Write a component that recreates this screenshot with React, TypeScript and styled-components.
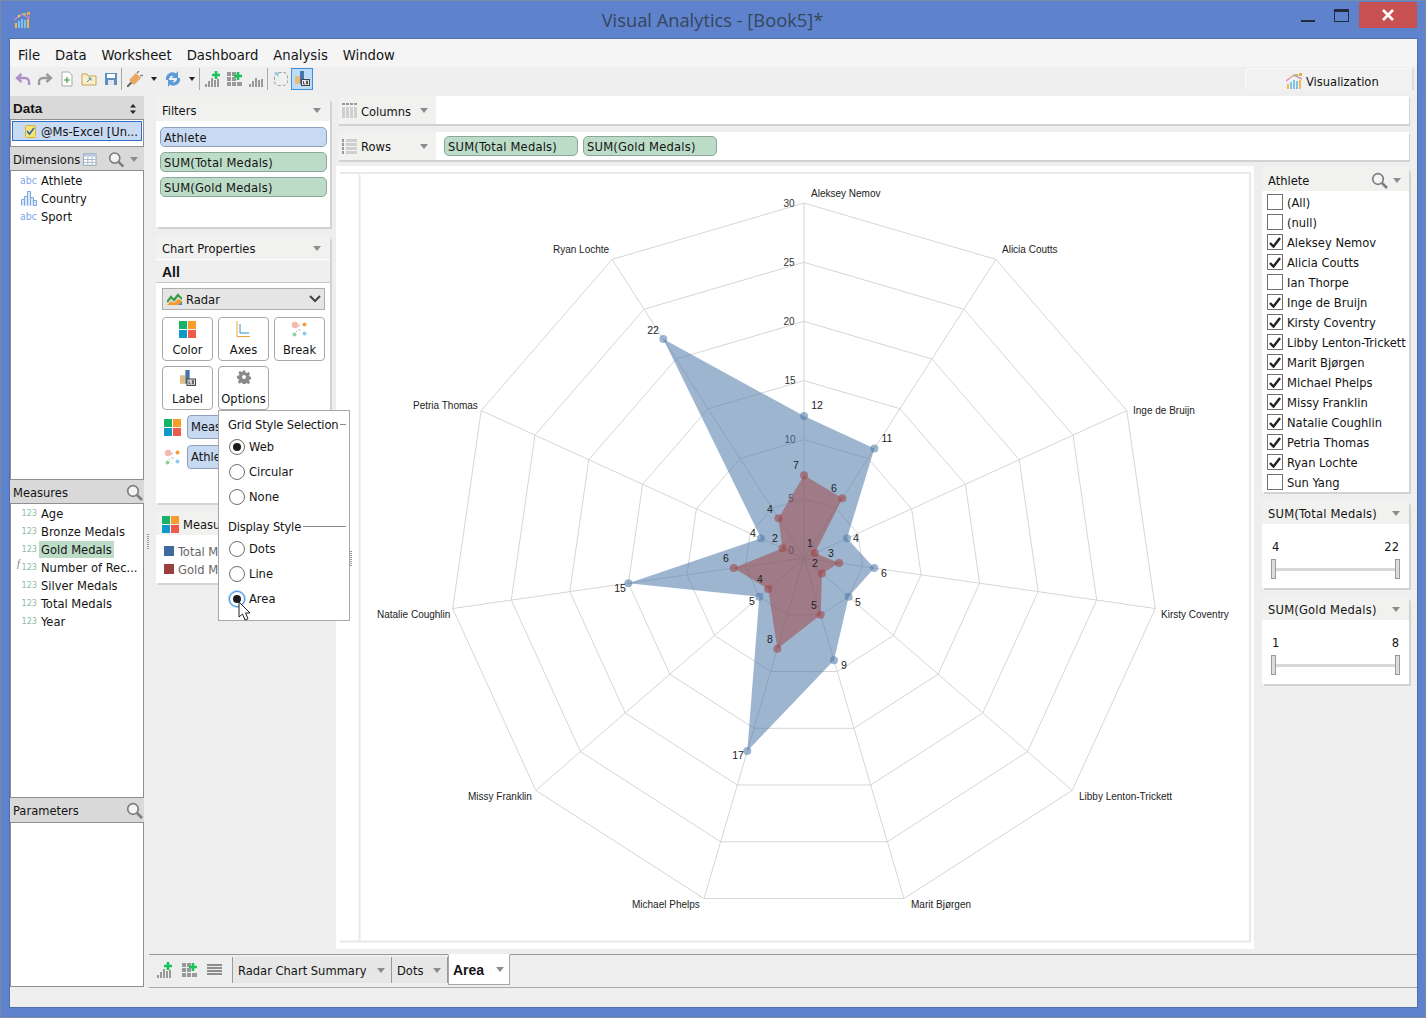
import React from "react";
import styled, { createGlobalStyle } from "styled-components";

const Global = createGlobalStyle`
  html, body { margin: 0; padding: 0; background: #5f82cc; }
  body { font-family: "DejaVu Sans", "Liberation Sans", sans-serif; font-stretch: condensed; font-size: 12.8px; color: #141414; }
  * { box-sizing: border-box; }
`;

const Win = styled.div`
  position: relative; width: 1426px; height: 1018px; background: #5f82cc;
  border: 1px solid #7a8ba8; display: flex; flex-direction: column; overflow: hidden;
`;
const TitleBar = styled.div`
  height: 38px; flex: none; display: grid; grid-template-columns: 1fr auto 1fr; align-items: start;
`;
const TitleLeft = styled.div`padding: 11px 0 0 13px; display: flex;`;
const TitleText = styled.div`
  font-family: "Open Sans", sans-serif; font-stretch: normal; font-size: 18.3px; color: #36465c; line-height: 38px; margin-left: -1px;
`;
const WinButtons = styled.div`display: flex; justify-content: flex-end; align-items: flex-start; padding-right: 8px;`;
const MinBtn = styled.div`width: 14px; height: 2px; background: #222c3c; margin-top: 19px; margin-right: 19px;`;
const MaxBtn = styled.div`width: 15px; height: 13px; border: 1.5px solid #222c3c; border-top-width: 3px; margin-top: 8px; margin-right: 10px;`;
const CloseBtn = styled.div`width: 58px; height: 26px; background: #c75050; margin-top: 1px; display: flex; align-items: center; justify-content: center;`;

const Content = styled.div`
  flex: none; margin-left: 9px; width: 1407px; height: 968px; background: #eeeeee; display: flex; flex-direction: column;
  box-shadow: 0 0 0 1px #506fae;
`;
const MenuBar = styled.div`height: 28px; flex: none; background: #f5f5f5; display: flex; align-items: center; padding: 2px 0 0 8px; gap: 15px; font-size: 14.7px;`;
const Toolbar = styled.div`height: 29px; flex: none; background: #efefef; display: flex; align-items: center; padding: 0 0 5px 5px; gap: 6px; position: relative;`;
const ToolSep = styled.div`width: 1px; height: 22px; background: #a9a9a9; margin: 0 -1px 0 -4px; flex: none;`;
const ToolCaret = styled.div`width: 0; height: 0; border: 3px solid transparent; border-top: 4px solid #222; border-bottom: none; margin: 0 2px; flex: none;`;
const ToolActive = styled.div`
  width: 22px; height: 22px; margin-left: -4px; border: 1px solid #3f8fe0; background: #bcdcf7; display: flex; align-items: center; justify-content: center; flex: none;
`;
const VizTab = styled.div`
  margin-left: auto; margin-right: 3px; width: 169px; height: 22px; align-self: flex-start; margin-top: 1px; background: #f1f1f1; border-radius: 6px 0 0 0;
  border-top: 1px solid #fafafa; border-left: 1px solid #fafafa; border-right: 2px solid #dcdcdc;
  display: flex; align-items: center; gap: 4px; padding: 3px 0 0 40px;
`;
const Main = styled.div`flex: 1; min-height: 0; display: grid; grid-template-columns: 134px 1fr;`;
const LeftPanel = styled.div`display: flex; flex-direction: column; border-right: 1px solid #8e8e94; border-left: 1px solid #8e8e94; border-bottom: 1px solid #8e8e94; margin-bottom: 1px;`;
const LeftHead = styled.div<{ $h: number }>`
  height: ${p => p.$h}px; flex: none; background: #d9d9d9; display: flex; align-items: center; gap: 3px;
  border-bottom: 1px solid #8e8e94; margin-left: -1px; margin-right: -1px; padding: ${p => (p.$h === 24 ? 2 : 0)}px 0 0 3px;
`;
const HeadGrow = styled.span`flex: 1;`;
const DataTitle = styled.span`font-family: "Liberation Sans", sans-serif; font-weight: 700; font-size: 13.5px;`;
const SortArrows = styled.svg`margin-right: 7px;`;
const SourceWrap = styled.div`height: 27px; flex: none; background: #fff; padding: 1px 1px 0 1px; border-bottom: 1px solid #8e8e94;`;
const SourceBox = styled.div`height: 20px; border: 1px solid #2f6fc7; background: #c9daf3; display: flex; align-items: center; padding-left: 12px; gap: 5px; white-space: nowrap; overflow: hidden;`;
const LeftList = styled.div<{ $h: number }>`height: ${p => p.$h}px; flex: none; background: #fff; border-bottom: 1px solid #8e8e94;`;
const LeftFill = styled.div`flex: 1; background: #fff;`;
const FieldRow = styled.div`height: 18px; display: flex; align-items: center; white-space: nowrap; position: relative;`;
const FieldIcon = styled.span<{ $c: string; $s: number }>`width: 28px; flex: none; padding-right: 2px; color: ${p => p.$c}; font-size: ${p => p.$s}px; display: flex; justify-content: flex-end; align-items: center; height: 18px; font-family: "DejaVu Sans", sans-serif;`;
const FieldName = styled.span<{ $hl?: boolean }>`padding: 0 2px; height: 17px; line-height: 17px; background: ${p => (p.$hl ? "#bcdcc8" : "transparent")};`;
const Fx = styled.span`position: absolute; left: 6px; top: 0; font-family: "Liberation Serif", serif; font-style: italic; font-size: 10px; color: #777;`;
const SpacerS = styled.span`width: 5px; flex: none;`;
const SearchEnd = styled.span`margin-right: 1px; display: flex;`;
const HeadCaret = styled.div`width: 0; height: 0; border-left: 4px solid transparent; border-right: 4px solid transparent; border-top: 5px solid #8c8c8c; flex: none; margin-right: 6px;`;

const RightPart = styled.div`display: flex; flex-direction: column; min-width: 0;`;
const Workspace = styled.div`flex: none; height: 858px; display: grid; grid-template-columns: 174px 1fr; padding-left: 12px; column-gap: 6px;`;
const SideCol = styled.div`display: flex; flex-direction: column; padding-top: 1px;`;
const Card = styled.div<{ $h: number; $mb?: number }>`
  height: ${p => p.$h}px; margin-bottom: ${p => p.$mb ?? 0}px; background: #fff; flex: none; box-shadow: 2px 2px 0 #d2d2d2; border-radius: 5px 5px 0 0; overflow: hidden;
`;
const CardHead = styled.div`height: 24px; background: #f1f1ef; display: flex; align-items: center; padding: 2px 9px 0 6px; justify-content: space-between;`;
const WideTitle = styled.span`letter-spacing: 0.2px;`;
const Caret = styled.div`width: 0; height: 0; border-left: 4px solid transparent; border-right: 4px solid transparent; border-top: 5px solid #8c8c8c; flex: none;`;
const PillStack = styled.div`display: flex; flex-direction: column; gap: 5px; padding: 6px 3px 0 4px;`;
const Pill = styled.div<{ $k: "b" | "g" }>`
  height: 20px; display: flex; align-items: center; padding-left: 3px; border-radius: 5px; white-space: nowrap; overflow: hidden; letter-spacing: 0.2px;
  background: ${p => (p.$k === "b" ? "#c8d9f2" : "#bcdcc8")}; border: 1px solid ${p => (p.$k === "b" ? "#8d9fbc" : "#8ba898")};
`;
const AllRow = styled.div`height: 24px; background: #efefef; border-top: 1px solid #fff; border-bottom: 1px solid #c8c8c8; padding-left: 6px; line-height: 24px; font-family: "Liberation Sans", sans-serif; font-weight: 700; font-size: 14px;`;
const SelectBox = styled.div`
  margin: 5px 5px 0 6px; height: 22px; border: 1px solid #adadad; background: #e5e5e5; display: flex; align-items: center; padding: 0 3px 0 4px; gap: 4px;
`;
const BtnGrid = styled.div`display: grid; grid-template-columns: repeat(3, 51px); column-gap: 5px; row-gap: 5px; padding: 7px 0 0 6px;`;
const PropBtn = styled.div`
  height: 44px; border: 1px solid #a8a8a8; border-radius: 4px; background: #fff; display: flex; flex-direction: column; align-items: center; justify-content: flex-start; padding-top: 3px; gap: 4px;
`;
const OptionsLabel = styled.span`margin-top: 3px;`;
const EncRow = styled.div`display: flex; align-items: center; gap: 6px; padding-left: 8px; height: 24px; margin-top: 5px; & + & { margin-top: 6px; }`;
const EncPill = styled.div`flex: 1; height: 24px; background: #c8d9f2; border: 1px solid #8d9fbc; border-radius: 4px; padding-left: 3px; line-height: 22px; white-space: nowrap; overflow: hidden;`;
const LegendRow = styled.div`display: flex; align-items: center; gap: 4px; height: 18px; padding-left: 8px; color: #666; white-space: nowrap;`;
const LegendSwatch = styled.span<{ $c: string }>`width: 10px; height: 10px; background: ${p => p.$c}; flex: none;`;
const LegendHead = styled.div`height: 23px; background: #f1f1ef; display: flex; align-items: center; gap: 4px; padding: 2px 0 0 6px; margin-bottom: 7px;`;

const CenterCol = styled.div`display: flex; flex-direction: column; min-width: 0; padding-right: 8px;`;
const Shelf = styled.div<{ $mb: number }>`
  margin-left: 2px; height: 28px; margin-bottom: ${p => p.$mb}px; flex: none; background: #fff; display: flex; align-items: center; box-shadow: 1px 2px 0 #d2d2d2; border-radius: 4px 0 0 0; gap: 5px;
`;
const ShelfHead = styled.div`width: 98px; height: 100%; background: #f1f1ef; display: flex; align-items: center; padding: 0 8px 0 4px; gap: 4px; flex: none; margin-right: 3px;`;
const ShelfLabel = styled.span<{ $dy?: number }>`flex: 1; padding-top: ${p => p.$dy ?? 0}px;`;
const ShelfPill = styled(Pill)`width: 134px; flex: none;`;
const LowerRow = styled.div`flex: 1; min-height: 0; display: grid; grid-template-columns: 918px 1fr; column-gap: 8px;`;
const ChartPanel = styled.div`height: 783px; background: #fff;`;
const ChartSvg = styled.svg`display: block; width: 918px; height: 783px;`;
const RightCol = styled.div`display: flex; flex-direction: column; padding-top: 1px;`;
const CheckList = styled.div`padding-top: 1px;`;
const SearchCaret = styled.span`display: flex; align-items: center; gap: 5px; margin-right: -1px;`;
const CheckRow = styled.div`height: 20px; display: flex; align-items: center; gap: 4px; padding-left: 5px; white-space: nowrap;`;
const CheckBox = styled.span`width: 16px; height: 16px; border: 1px solid #707070; background: #fff; display: flex; align-items: center; justify-content: center; flex: none;`;
const RangeVals = styled.div`display: flex; justify-content: space-between; padding: 14px 10px 0 10px; height: 35px; line-height: 18px;`;
const Slider = styled.div`margin: 0 9px; height: 20px; display: flex; align-items: center; justify-content: space-between; position: relative;`;
const SliderTrack = styled.div`position: absolute; left: 3px; right: 3px; top: 9px; height: 3px; background: #d8d8d8;`;
const SliderThumb = styled.div`width: 5px; height: 20px; background: #dcdcdc; border: 1px solid #9a9a9a; position: relative;`;

const TabBar = styled.div`flex: 1; margin-left: 5px; border-top: 1px solid #9a9a9a; border-bottom: 1px solid #aaa; display: flex; align-items: flex-start; padding-top: 2px;`;
const TabIcons = styled.div`display: flex; align-items: center; gap: 9px; width: 84px; height: 26px; padding-left: 8px; flex: none; border-right: 1px solid #9a9a9a;`;
const Tab = styled.div<{ $w: number }>`
  width: ${p => p.$w}px; height: 26px; background: #e7e7e7; display: flex; align-items: center; justify-content: space-between; padding: 0 6px 0 5px; border-right: 1px solid #9a9a9a; flex: none;
`;
const ActiveTab = styled.div`
  width: 62px; height: 31px; margin-top: -3px; background: #fff; display: flex; align-items: center; justify-content: space-between; padding: 0 5px 0 4px;
  border: 1px solid #a8a8a8; border-top-color: #fff; font-family: "Liberation Sans", sans-serif; font-weight: 700; font-size: 14px; flex: none;
`;
const StatusBar = styled.div`height: 19px; flex: none; background: #efefef;`;

const Popup = styled.div`
  position: absolute; left: 217px; top: 409px; width: 132px; height: 211px; background: #fff; border: 1px solid #a8a8a8; padding: 4px 3px 0 9px;
`;
const PopTitle = styled.div`display: flex; align-items: center; gap: 2px; height: 18px; white-space: nowrap; margin-bottom: 1px; letter-spacing: -0.15px;`;
const PopTitleLow = styled(PopTitle)`margin-top: 8px;`;
const PopLine = styled.span`flex: 1; height: 1px; background: #8a8a8a;`;
const PopRow = styled.div`height: 25px; display: flex; align-items: center; gap: 4px; padding-left: 1px;`;
const Radio = styled.span<{ $on?: boolean; $focus?: boolean }>`
  width: 16px; height: 16px; border-radius: 50%; border: 1px solid ${p => (p.$focus ? "#3f8fe0" : "#6e6e6e")}; background: #fff; display: flex; align-items: center; justify-content: center; flex: none;
  box-shadow: ${p => (p.$focus ? "0 0 0 1px #a9d2f7" : "none")};
  &::after { content: ""; width: 8px; height: 8px; border-radius: 50%; background: ${p => (p.$on ? "#1c1c1c" : "transparent")}; }
`;
const Cursor = styled.svg`position: absolute; left: 237px; top: 600px; width: 14px; height: 21px;`;
const Grip = styled.div<{ $x: number; $y: number }>`position: absolute; left: ${p => p.$x}px; top: ${p => p.$y}px; width: 2px; height: 16px; background: repeating-linear-gradient(#999 0 1px, transparent 1px 2px);`;
const FlipSvg = styled.svg<{ $flip?: boolean }>`transform: ${p => (p.$flip ? "scaleX(-1)" : "none")}; flex: none;`;

/* ---- icons ---- */
const Search = () => (
  <svg width="17" height="17" viewBox="0 0 17 17"><circle cx="7" cy="7" r="5.300" fill="#f4f4f4" stroke="#7d7d7d" strokeWidth="1.700" /><path d="M11 11l5 5" stroke="#7d7d7d" strokeWidth="2.600" /></svg>
);
const Viz = () => (
  <svg width="16" height="16" viewBox="0 0 16 16">
    <path d="M0 8 8 2l8 4" fill="none" stroke="#d88bb0" strokeWidth="1.400" />
    <rect x="13" y="0" width="3" height="3" fill="#f2a93b" /><rect x="9" y="1" width="3" height="2" fill="#8ccf7a" /><rect x="4" y="3" width="2" height="2" fill="#f0d060" />
    <rect x="1" y="11" width="2" height="5" fill="#f5b942" /><rect x="4" y="9" width="2" height="7" fill="#7cc4ee" /><rect x="7" y="7" width="2" height="9" fill="#7cc4ee" /><rect x="10" y="8" width="2" height="8" fill="#7cc4ee" /><rect x="13" y="7" width="2" height="9" fill="#f5b942" />
  </svg>
);
const Squares = ({ s = 17 }: { s?: number }) => (
  <svg width={s} height={s} viewBox="0 0 17 17"><rect width="8" height="8" fill="#16b368" /><rect x="9" width="8" height="8" fill="#f89c2a" /><rect y="9" width="8" height="8" fill="#0e9ac8" /><rect x="9" y="9" width="8" height="8" fill="#f05a4a" /></svg>
);
const BreakIcon = () => (
  <svg width="17" height="17" viewBox="0 0 17 17"><circle cx="4" cy="4" r="3.200" fill="#f5b9b0" /><circle cx="13.500" cy="3.500" r="2" fill="#f5a033" /><circle cx="3.500" cy="13.500" r="2" fill="#8fd0a0" /><circle cx="13.500" cy="12.500" r="2" fill="#8ccbf0" /><path d="M7 5l2-1M7.500 8l2 2M6 10l-1 1" stroke="#999" strokeWidth=".8" /></svg>
);
const LabelIcon = ({ s = 16 }: { s?: number }) => (
  <svg width={s} height={s} viewBox="0 0 16 16"><rect x="1" y="5" width="5" height="8" fill="#e2bd80" /><rect x="6" y="0" width="4" height="13" fill="#4574aa" /><rect x="7.500" y="8.500" width="8" height="6" fill="#e8e8e8" stroke="#444" /><path d="M9.500 10v3h1.500M12.500 10h1v3h-1z" stroke="#333" fill="none" strokeWidth=".8" /></svg>
);
const Gear = () => (
  <svg width="14" height="14" viewBox="0 0 24 24"><path fill="#8a8a8a" d="M10 1h4l.7 3.300 2 .8L19.600 3.300l2.800 2.800-1.800 2.900.8 2 3.300.7v4l-3.300.7-.8 2 1.800 2.900-2.800 2.800-2.900-1.800-2 .8-.7 2.600h-4l-.7-3.300-2-.8-2.900 1.800-2.800-2.800 1.800-2.900-.8-2L0 14v-4l3.300-.7.8-2L2.300 4.400 5 1.600l2.900 1.800 2-.8z" /><circle cx="12" cy="12" r="3.500" fill="#fff" /></svg>
);
const AxesIcon = () => (
  <svg width="16" height="17" viewBox="0 0 16 17"><path d="M1 0v15.500h13" fill="none" stroke="#f0a030" strokeWidth="1" /><path d="M4 3v9h9" fill="none" stroke="#2b90c8" strokeWidth="1" /></svg>
);
const RadarIcon = () => (
  <svg width="15" height="12" viewBox="0 0 15 12"><path d="M0 12 4 8l3 2 4-4 4 2v4z" fill="#f39a2c" /><path d="M11 12l4-3v3z" fill="#2c8fd0" /><path d="M0 9l4-5 3 3 4-5 4 4" fill="none" stroke="#3b9a4a" strokeWidth="2.200" /></svg>
);
const Undo = ({ c, flip }: { c: string; flip?: boolean }) => (
  <FlipSvg $flip={flip} width="16" height="16" viewBox="0 0 16 16"><path d="M6.500 3 2 7l4.500 4" fill="none" stroke={c} strokeWidth="2.400" /><path d="M3 7h7a4 4 0 0 1 4 4v3" fill="none" stroke={c} strokeWidth="2.400" /></FlipSvg>
);
const NewDoc = () => (
  <svg width="16" height="16" viewBox="0 0 16 16"><path d="M3 1h7l3 3v11H3z" fill="#fff" stroke="#aaa" /><path d="M8 6v6M5 9h6" stroke="#3a9a4a" strokeWidth="1.200" /></svg>
);
const Folder = () => (
  <svg width="16" height="16" viewBox="0 0 16 16"><path d="M1 3h5l1 2h8v9H1z" fill="#fbeec8" stroke="#c9a45a" /><path d="M6 11l4-4M7.500 7H10v2.500" stroke="#3a8fc8" fill="none" /></svg>
);
const Save = () => (
  <svg width="16" height="16" viewBox="0 0 16 16"><rect x="2" y="2" width="12" height="12" fill="#5d8fc0" /><rect x="4" y="3" width="8" height="4" fill="#fff" /><rect x="5" y="9" width="6" height="5" fill="#dfe8f0" /></svg>
);
const Plug = () => (
  <svg width="16" height="16" viewBox="0 0 16 16"><path d="M0 16l5-5" stroke="#666" strokeWidth="2" /><path d="M2 9l7-7 5 5-7 7z" fill="#e8a860" /><path d="M10 2l2-2M13 5l3-1" stroke="#777" strokeWidth="1.200" /></svg>
);
const Refresh = () => (
  <svg width="16" height="16" viewBox="0 0 16 16"><path d="M1 9a6.500 6.500 0 0 1 10-6.500L13 0v7H6.500l2-2A3.500 3.500 0 0 0 4 9z" fill="#5d9bd8" /><path d="M15 7a6.500 6.500 0 0 1-10 6.500L3 16V9h6.500l-2 2A3.500 3.500 0 0 0 12 7z" fill="#5d9bd8" /></svg>
);
const BarsAdd = ({ plus = true }: { plus?: boolean }) => (
  <svg width="16" height="16" viewBox="0 0 16 16"><rect x="0" y="13" width="2" height="3" fill="#999" /><rect x="3" y="10" width="2" height="6" fill="#999" /><rect x="6" y="7" width="2" height="9" fill="#999" /><rect x="9" y="9" width="2" height="7" fill="#999" /><rect x="12" y="8" width="2" height="8" fill="#999" />{plus && <path d="M11 0v8M7 4h8" stroke="#19c25a" strokeWidth="2.600" />}</svg>
);
const GridAdd = () => (
  <svg width="16" height="16" viewBox="0 0 16 16"><g fill="#999"><rect y="1" width="4" height="4" /><rect x="5" y="1" width="4" height="4" /><rect y="6" width="4" height="4" /><rect x="5" y="6" width="4" height="4" /><rect y="11" width="4" height="4" /><rect x="5" y="11" width="4" height="4" /><rect x="10" y="11" width="5" height="4" /></g><path d="M11 1v8M7 5h8" stroke="#19c25a" strokeWidth="2.600" /></svg>
);
const Dashed = () => (
  <svg width="16" height="16" viewBox="0 0 16 16"><rect x="1.500" y="1.500" width="13" height="13" rx="4" fill="none" stroke="#999" strokeDasharray="3 2" /><path d="M1 1l5 1-1 4z" fill="#8cc8e8" /></svg>
);
const ListLines = () => (
  <svg width="15" height="12" viewBox="0 0 15 12"><path d="M0 1h15M0 4h15M0 7h15M0 10h15" stroke="#8d8d8d" strokeWidth="1.800" /></svg>
);
const GridMini = () => (
  <svg width="14" height="13" viewBox="0 0 14 13"><rect x=".5" y=".5" width="13" height="12" fill="#fff" stroke="#8fa3bd" /><rect x=".5" y=".5" width="13" height="3" fill="#b9c7da" /><path d="M5 4v9M9.500 4v9M1 6.500h12M1 9.500h12" stroke="#a9b6c8" /></svg>
);
const ColsIcon = () => (
  <svg width="15" height="16" viewBox="0 0 15 16"><g fill="#cfcfcf"><rect x="0" y="5" width="3" height="11" /><rect x="4" y="5" width="3" height="11" /><rect x="8" y="5" width="3" height="11" /><rect x="12" y="5" width="3" height="11" /></g><g fill="#999"><rect x="0" y="1" width="3" height="2" /><rect x="4" y="1" width="3" height="2" /><rect x="8" y="1" width="3" height="2" /><rect x="12" y="1" width="3" height="2" /></g></svg>
);
const RowsIcon = () => (
  <svg width="15" height="15" viewBox="0 0 15 15"><g fill="#cfcfcf"><rect x="4" y="0" width="11" height="3" /><rect x="4" y="4" width="11" height="3" /><rect x="4" y="8" width="11" height="3" /><rect x="4" y="12" width="11" height="3" /></g><g fill="#999"><rect y="0" width="2" height="3" /><rect y="4" width="2" height="3" /><rect y="8" width="2" height="3" /><rect y="12" width="2" height="3" /></g></svg>
);
const CountryIcon = () => (
  <svg width="16" height="15" viewBox="0 0 16 15"><path d="M.5 14.500v-6h3v6M3.500 14.500v-9h3v9M6.500 14.500V.5h3v14M9.500 14.500v-8h3v8M12.500 14.500v-5h3v5z" fill="#dbe8fa" stroke="#7ea6e0" /></svg>
);

/* ---- radar ---- */
const CX = 804, CY = 558, U = 11.83;
const axes = ["Aleksey Nemov", "Alicia Coutts", "Inge de Bruijn", "Kirsty Coventry", "Libby Lenton-Trickett", "Marit Bjørgen", "Michael Phelps", "Missy Franklin", "Natalie Coughlin", "Petria Thomas", "Ryan Lochte"];
const axisPos: [number, number][] = [[811, 197], [1002, 253], [1133, 414], [1161, 618], [1079, 800], [911, 908], [632, 908], [468, 800], [377, 618], [413, 409], [553, 253]];
const total = [12, 11, 4, 6, 5, 9, 17, 5, 15, 4, 22];
const gold = [7, 6, 1, 3, 2, 5, 8, 4, 6, 2, 4];
const totalLab: [number, number][] = [[817, 405], [887, 438], [856, 538], [884, 573], [858, 602], [844, 665], [738, 755], [752, 601], [620, 588], [753, 533], [653, 330]];
const goldLab: [number, number][] = [[796, 465], [834, 488], [810, 543], [831, 553], [815, 563], [814, 605], [770, 639], [760, 579], [726, 558], [775, 538], [770, 509]];
const ticks: [string, number, number][] = [["30", 789, 203], ["25", 789, 262], ["20", 789, 321], ["15", 790, 380], ["10", 790, 439], ["5", 791, 498], ["0", 791, 550]];
const pt = (i: number, v: number): [number, number] => {
  const a = (i * 2 * Math.PI) / 11;
  return [CX + v * U * Math.sin(a), CY - v * U * Math.cos(a)];
};
const poly = (vals: number[]) => vals.map((v, i) => pt(i, v).map(n => n.toFixed(1)).join(",")).join(" ");

const Radar = () => (
  <ChartSvg viewBox="336 166 918 783">
    <path d="M340 173H1250V941.500H340M359.500 173V941" fill="none" stroke="#e9e9e9" strokeWidth="2" />
    {[5, 10, 15, 20, 25, 30].map(r => (
      <polygon key={r} points={poly(axes.map(() => r))} fill="none" stroke="#d6d6d6" strokeWidth="1" />
    ))}
    {axes.map((_, i) => {
      const [x, y] = pt(i, 30);
      return <line key={i} x1={CX} y1={CY} x2={x} y2={y} stroke="#d6d6d6" strokeWidth="1" />;
    })}
    {ticks.map(([t, x, y]) => (
      <text key={t} x={x} y={y + 3.500} textAnchor="middle" fontFamily="Liberation Sans" fontSize="10" fill="#333">{t}</text>
    ))}
    {axes.map((a, i) => (
      <text key={a} x={axisPos[i][0]} y={axisPos[i][1]} fontFamily="Liberation Sans" fontSize="10" fill="#222">{a}</text>
    ))}
    <polygon points={poly(total)} fill="#4e79a7" fillOpacity="0.55" />
    {total.map((v, i) => {
      const [x, y] = pt(i, v);
      return <circle key={i} cx={x} cy={y} r="4" fill="#4e79a7" fillOpacity="0.55" />;
    })}
    <polygon points={poly(gold)} fill="#a04040" fillOpacity="0.5" />
    {gold.map((v, i) => {
      const [x, y] = pt(i, v);
      return <circle key={i} cx={x} cy={y} r="4" fill="#a04040" fillOpacity="0.55" />;
    })}
    {total.map((v, i) => (
      <text key={i} x={totalLab[i][0]} y={totalLab[i][1] + 3.500} textAnchor="middle" fontFamily="Liberation Sans" fontSize="10.500" fill="#222">{v}</text>
    ))}
    {gold.map((v, i) => (
      <text key={i} x={goldLab[i][0]} y={goldLab[i][1] + 3.500} textAnchor="middle" fontFamily="Liberation Sans" fontSize="10.500" fill="#222">{v}</text>
    ))}
  </ChartSvg>
);

const athletes: [string, boolean][] = [["(All)", false], ["(null)", false], ["Aleksey Nemov", true], ["Alicia Coutts", true], ["Ian Thorpe", false], ["Inge de Bruijn", true], ["Kirsty Coventry", true], ["Libby Lenton-Trickett", true], ["Marit Bjørgen", true], ["Michael Phelps", true], ["Missy Franklin", true], ["Natalie Coughlin", true], ["Petria Thomas", true], ["Ryan Lochte", true], ["Sun Yang", false]];
const measures = ["Age", "Bronze Medals", "Gold Medals", "Number of Rec...", "Silver Medals", "Total Medals", "Year"];

const RangeCard = ({ title, lo, hi, mb }: { title: string; lo: string; hi: string; mb: number }) => (
  <Card $h={88} $mb={mb}>
    <CardHead><WideTitle>{title}</WideTitle><Caret /></CardHead>
    <RangeVals><span>{lo}</span><span>{hi}</span></RangeVals>
    <Slider><SliderTrack /><SliderThumb /><SliderThumb /></Slider>
  </Card>
);

export default function App() {
  return (
    <Win>
      <Global />
      <TitleBar>
        <TitleLeft><Viz /></TitleLeft>
        <TitleText>Visual Analytics - [Book5]*</TitleText>
        <WinButtons>
          <MinBtn /><MaxBtn />
          <CloseBtn><svg width="12" height="12" viewBox="0 0 12 12"><path d="M1 1l10 10M11 1 1 11" stroke="#fff" strokeWidth="2.600" /></svg></CloseBtn>
        </WinButtons>
      </TitleBar>
      <Content>
        <MenuBar>{["File", "Data", "Worksheet", "Dashboard", "Analysis", "Window"].map(m => <span key={m}>{m}</span>)}</MenuBar>
        <Toolbar>
          <Undo c="#b08fc8" /><Undo c="#9a9a9a" flip /><NewDoc /><Folder /><Save />
          <ToolSep /><Plug /><ToolCaret /><Refresh /><ToolCaret />
          <ToolSep /><BarsAdd /><GridAdd /><BarsAdd plus={false} />
          <ToolSep /><Dashed />
          <ToolActive><LabelIcon /></ToolActive>
          <VizTab><Viz />Visualization</VizTab>
        </Toolbar>
        <Main>
          <LeftPanel>
            <LeftHead $h={24}><DataTitle>Data</DataTitle><HeadGrow />
              <SortArrows width="8" height="12" viewBox="0 0 8 12"><path d="M4 1 7 4.500H1zM4 11 1 7.500h6z" fill="#222" /></SortArrows>
            </LeftHead>
            <SourceWrap>
              <SourceBox>
                <svg width="11" height="13" viewBox="0 0 11 13"><rect x=".5" y=".5" width="10" height="12" rx="1" fill="#f6e27a" stroke="#d4b53c" /><path d="M2 6l2.500 3L9 3" fill="none" stroke="#2a5fa8" strokeWidth="1.500" /></svg>
                @Ms-Excel [Un...
              </SourceBox>
            </SourceWrap>
            <LeftHead $h={24}>Dimensions<GridMini /><SpacerS /><Search /><HeadGrow /><HeadCaret /></LeftHead>
            <LeftList $h={309}>
              <FieldRow><FieldIcon $c="#7fa8ea" $s={10.5}>abc</FieldIcon><FieldName>Athlete</FieldName></FieldRow>
              <FieldRow><FieldIcon $c="#7fa8ea" $s={10.5}><CountryIcon /></FieldIcon><FieldName>Country</FieldName></FieldRow>
              <FieldRow><FieldIcon $c="#7fa8ea" $s={10.5}>abc</FieldIcon><FieldName>Sport</FieldName></FieldRow>
            </LeftList>
            <LeftHead $h={24}>Measures<HeadGrow /><SearchEnd><Search /></SearchEnd></LeftHead>
            <LeftList $h={294}>
              {measures.map(m => (
                <FieldRow key={m}>
                  {m.startsWith("Number") && <Fx>f</Fx>}
                  <FieldIcon $c="#8ebca4" $s={9}>123</FieldIcon>
                  <FieldName $hl={m === "Gold Medals"}>{m}</FieldName>
                </FieldRow>
              ))}
            </LeftList>
            <LeftHead $h={25}>Parameters<HeadGrow /><SearchEnd><Search /></SearchEnd></LeftHead>
            <LeftFill />
          </LeftPanel>
          <RightPart>
            <Workspace>
              <SideCol>
                <Card $h={130} $mb={8}>
                  <CardHead>Filters<Caret /></CardHead>
                  <PillStack>
                    <Pill $k="b">Athlete</Pill>
                    <Pill $k="g">SUM(Total Medals)</Pill>
                    <Pill $k="g">SUM(Gold Medals)</Pill>
                  </PillStack>
                </Card>
                <Card $h={268} $mb={9}>
                  <CardHead>Chart Properties<Caret /></CardHead>
                  <AllRow>All</AllRow>
                  <SelectBox>
                    <RadarIcon />Radar<HeadGrow />
                    <svg width="12" height="8" viewBox="0 0 12 8"><path d="M1 1l5 5 5-5" fill="none" stroke="#444" strokeWidth="2" /></svg>
                  </SelectBox>
                  <BtnGrid>
                    <PropBtn><Squares />Color</PropBtn>
                    <PropBtn><AxesIcon />Axes</PropBtn>
                    <PropBtn><BreakIcon />Break</PropBtn>
                    <PropBtn><LabelIcon s={17} />Label</PropBtn>
                    <PropBtn><Gear /><OptionsLabel>Options</OptionsLabel></PropBtn>
                  </BtnGrid>
                  <EncRow><Squares /><EncPill>Measures</EncPill></EncRow>
                  <EncRow><BreakIcon /><EncPill>Athlete</EncPill></EncRow>
                </Card>
                <Card $h={71}>
                  <LegendHead><Squares />Measures</LegendHead>
                  <LegendRow><LegendSwatch $c="#3f6a9c" />Total Medals</LegendRow>
                  <LegendRow><LegendSwatch $c="#9c3f3f" />Gold Medals</LegendRow>
                </Card>
              </SideCol>
              <CenterCol>
                <Shelf $mb={8}>
                  <ShelfHead><ColsIcon /><ShelfLabel $dy={2}>Columns</ShelfLabel><Caret /></ShelfHead>
                </Shelf>
                <Shelf $mb={6}>
                  <ShelfHead><RowsIcon /><ShelfLabel>Rows</ShelfLabel><Caret /></ShelfHead>
                  <ShelfPill $k="g">SUM(Total Medals)</ShelfPill>
                  <ShelfPill $k="g">SUM(Gold Medals)</ShelfPill>
                </Shelf>
                <LowerRow>
                  <ChartPanel><Radar /></ChartPanel>
                  <RightCol>
                    <Card $h={325} $mb={8}>
                      <CardHead>Athlete
                        <SearchCaret><Search /><Caret /></SearchCaret>
                      </CardHead>
                      <CheckList>
                        {athletes.map(([n, c]) => (
                          <CheckRow key={n}>
                            <CheckBox>{c && <svg width="12" height="11" viewBox="0 0 12 11"><path d="M1 6l3.500 3.500L11 1" fill="none" stroke="#222" strokeWidth="2.400" /></svg>}</CheckBox>
                            {n}
                          </CheckRow>
                        ))}
                      </CheckList>
                    </Card>
                    <RangeCard title="SUM(Total Medals)" lo="4" hi="22" mb={8} />
                    <RangeCard title="SUM(Gold Medals)" lo="1" hi="8" mb={0} />
                  </RightCol>
                </LowerRow>
              </CenterCol>
            </Workspace>
            <TabBar>
              <TabIcons><BarsAdd /><GridAdd /><ListLines /></TabIcons>
              <Tab $w={159}>Radar Chart Summary<Caret /></Tab>
              <Tab $w={56}>Dots<Caret /></Tab>
              <ActiveTab>Area<Caret /></ActiveTab>
            </TabBar>
          </RightPart>
        </Main>
        <StatusBar />
      </Content>
      <Grip $x={146} $y={533} />
      <Grip $x={349} $y={550} />
      <Popup>
        <PopTitle>Grid Style Selection<PopLine /></PopTitle>
        <PopRow><Radio $on />Web</PopRow>
        <PopRow><Radio />Circular</PopRow>
        <PopRow><Radio />None</PopRow>
        <PopTitleLow>Display Style<PopLine /></PopTitleLow>
        <PopRow><Radio />Dots</PopRow>
        <PopRow><Radio />Line</PopRow>
        <PopRow><Radio $on $focus />Area</PopRow>
      </Popup>
      <Cursor viewBox="0 0 14 21"><path d="M1 1v15l3.500-3 2.500 6 3-1.300-2.500-5.700H12z" fill="#fff" stroke="#222" strokeWidth="1" /></Cursor>
    </Win>
  );
}
